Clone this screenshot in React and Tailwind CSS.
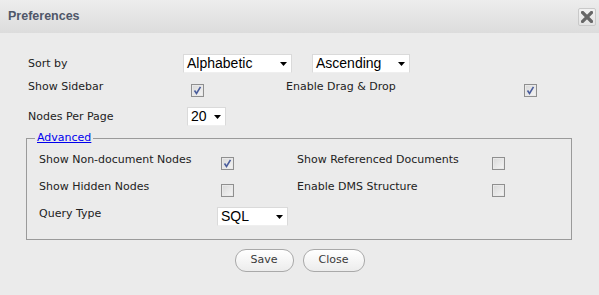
import React from "react";

const lbl = "font-['DejaVu_Sans',sans-serif] text-[11px] text-[#222] leading-[20px] whitespace-nowrap";

function Check({ checked }) {
  return (
    <svg width="13" height="13" viewBox="0 0 13 13" className="block shrink-0">
      <defs>
        <linearGradient id="cbg" x1="0" y1="0" x2="1" y2="1">
          <stop offset="0" stopColor="#d9d9d9" />
          <stop offset="1" stopColor="#f4f4f4" />
        </linearGradient>
      </defs>
      <rect x="0.5" y="0.5" width="12" height="12" fill="#fff" stroke="#8f8f8f" />
      <rect x="1.5" y="1.5" width="10" height="10" fill="url(#cbg)" stroke="#e9e9e9" />
      {checked && (
        <path d="M3.5 6.5 L5.5 9.5 L9.5 2.8" fill="none" stroke="#4a5d9c" strokeWidth="1.6" />
      )}
    </svg>
  );
}

function Select({ value, w }) {
  return (
    <div
      className={`${w} h-[19px] bg-white border border-[#dadada] border-b-[#efefef] flex items-center justify-between pl-[3px] pr-[4px] shrink-0`}
    >
      <span className="font-['Liberation_Sans',Arial,sans-serif] text-[14px] leading-[17px] text-black">{value}</span>
      <svg width="7" height="4" viewBox="0 0 7 4" className="block">
        <path d="M0 0 H7 L3.5 4 Z" fill="#000" />
      </svg>
    </div>
  );
}

export default function App() {
  return (
    <div className="w-[599px] h-[295px] bg-[#ebebeb] flex flex-col overflow-hidden">
      <div className="h-[33px] shrink-0 bg-gradient-to-b from-[#ededed] to-[#dcdcdc] flex items-center justify-between pl-[8px] pr-[3px]">
        <span className="font-['Liberation_Sans',Arial,sans-serif] font-bold text-[12.5px] text-[#4f5769] pb-[1px]">Preferences</span>
        <div className="w-[18px] h-[18px] border border-[#c9c9c9] rounded-[2px] bg-gradient-to-b from-[#f2f2f2] to-[#e4e4e4] flex items-center justify-center">
          <svg width="12" height="12" viewBox="0 0 12 12" className="block">
            <path d="M1.5 1.5 L10.5 10.5 M10.5 1.5 L1.5 10.5" stroke="#676767" strokeWidth="3.2" strokeLinecap="square" />
          </svg>
        </div>
      </div>

      <div className="pl-[28px] pt-[21px]">
        <div className="flex items-center h-[19px]">
          <div className={`${lbl} w-[155px]`}>Sort by</div>
          <Select value="Alphabetic" w="w-[109px]" />
          <div className="w-[20px]" />
          <Select value="Ascending" w="w-[98px]" />
        </div>
        <div className="flex items-start h-[20px] mt-[4px]">
          <div className={`${lbl} w-[163px]`}>Show Sidebar</div>
          <div className="mt-[7px]"><Check checked /></div>
          <div className="w-[82px]" />
          <div className={`${lbl} w-[238px]`}>Enable Drag &amp; Drop</div>
          <div className="mt-[7px]"><Check checked /></div>
        </div>
        <div className="flex items-start h-[19px] mt-[10px]">
          <div className={`${lbl} leading-[14px] w-[159px]`}>Nodes Per Page</div>
          <Select value="20" w="w-[39px]" />
        </div>
      </div>

      <fieldset className="mt-[4px] ml-[26px] w-[546px] border border-[#9a9a9a] pb-[13px]">
        <legend className="ml-[8px] px-[2px] font-['DejaVu_Sans',sans-serif] text-[11px] leading-[16px] text-[#0000ee] underline">
          Advanced
        </legend>
        <div className="pl-[12px] pt-[4px]">
          <div className="flex items-start h-[27px]">
            <div className={`${lbl} w-[182px]`}>Show Non-document Nodes</div>
            <div className="mt-[7px]"><Check checked /></div>
            <div className="w-[63px]" />
            <div className={`${lbl} w-[195px]`}>Show Referenced Documents</div>
            <div className="mt-[7px]"><Check /></div>
          </div>
          <div className="flex items-start h-[27px]">
            <div className={`${lbl} w-[182px]`}>Show Hidden Nodes</div>
            <div className="mt-[7px]"><Check /></div>
            <div className="w-[63px]" />
            <div className={`${lbl} w-[195px]`}>Enable DMS Structure</div>
            <div className="mt-[7px]"><Check /></div>
          </div>
          <div className="flex items-start h-[22px]">
            <div className={`${lbl} w-[178px]`}>Query Type</div>
            <div className="mt-[3px]"><Select value="SQL" w="w-[71px]" /></div>
          </div>
        </div>
      </fieldset>

      <div className="flex justify-center gap-[9px] mt-[9px]">
        <button className="w-[59px] h-[23px] rounded-[11px] border border-[#a9a9a9] bg-gradient-to-b from-[#ffffff] to-[#ececec] font-['DejaVu_Sans',sans-serif] text-[11px] text-[#3a3a3a]">
          Save
        </button>
        <button className="w-[62px] h-[23px] rounded-[11px] border border-[#a9a9a9] bg-gradient-to-b from-[#ffffff] to-[#ececec] font-['DejaVu_Sans',sans-serif] text-[11px] text-[#3a3a3a]">
          Close
        </button>
      </div>
    </div>
  );
}
